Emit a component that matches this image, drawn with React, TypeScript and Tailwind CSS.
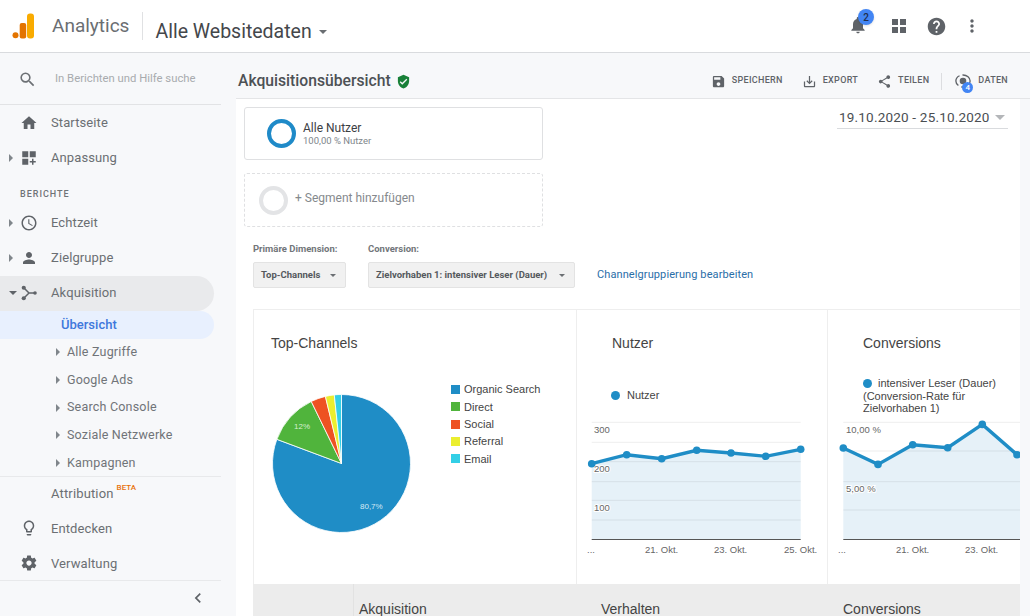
import React from "react";

const roboto = "[font-family:Roboto,'Noto_Sans',sans-serif]";

const P = {
  home: "M10 20v-6h4v6h5v-8h3L12 3 2 12h3v8z",
  search: "M15.5 14h-.79l-.28-.27A6.47 6.47 0 0 0 16 9.5 6.5 6.5 0 1 0 9.5 16c1.61 0 3.09-.59 4.23-1.57l.27.28v.79l5 4.99L20.49 19l-4.99-5zm-6 0C7.01 14 5 11.99 5 9.5S7.01 5 9.5 5 14 7.01 14 9.5 11.99 14 9.5 14z",
  clock: "M11.99 2C6.47 2 2 6.48 2 12s4.47 10 9.99 10C17.52 22 22 17.52 22 12S17.52 2 11.99 2zM12 20c-4.42 0-8-3.58-8-8s3.58-8 8-8 8 3.58 8 8-3.58 8-8 8zm.5-13H11v6l5.25 3.15.75-1.23-4.5-2.67z",
  person: "M12 12c2.21 0 4-1.79 4-4s-1.79-4-4-4-4 1.79-4 4 1.79 4 4 4zm0 2c-2.67 0-8 1.34-8 4v2h16v-2c0-2.66-5.33-4-8-4z",
  bulb: "M9 21c0 .55.45 1 1 1h4c.55 0 1-.45 1-1v-1H9v1zm3-19C8.14 2 5 5.14 5 9c0 2.38 1.19 4.47 3 5.74V17c0 .55.45 1 1 1h6c.55 0 1-.45 1-1v-2.26c1.81-1.27 3-3.36 3-5.74 0-3.86-3.14-7-7-7zm2.85 11.1l-.85.6V16h-4v-2.3l-.85-.6C7.8 12.16 7 10.63 7 9c0-2.76 2.24-5 5-5s5 2.24 5 5c0 1.63-.8 3.16-2.15 4.1z",
  gear: "M19.43 12.98c.04-.32.07-.64.07-.98s-.03-.66-.07-.98l2.11-1.65c.19-.15.24-.42.12-.64l-2-3.46c-.12-.22-.39-.3-.61-.22l-2.49 1c-.52-.4-1.08-.73-1.69-.98l-.38-2.65C14.46 2.18 14.25 2 14 2h-4c-.25 0-.46.18-.49.42l-.38 2.65c-.61.25-1.17.59-1.69.98l-2.49-1c-.23-.09-.49 0-.61.22l-2 3.46c-.13.22-.07.49.12.64l2.11 1.65c-.04.32-.07.65-.07.98s.03.66.07.98l-2.11 1.65c-.19.15-.24.42-.12.64l2 3.46c.12.22.39.3.61.22l2.49-1c.52.4 1.08.73 1.69.98l.38 2.65c.03.24.24.42.49.42h4c.25 0 .46-.18.49-.42l.38-2.65c.61-.25 1.17-.59 1.69-.98l2.49 1c.23.09.49 0 .61-.22l2-3.46c.12-.22.07-.49-.12-.64l-2.11-1.65zM12 15.5c-1.93 0-3.5-1.57-3.5-3.5s1.57-3.5 3.5-3.5 3.5 1.57 3.5 3.5-1.57 3.5-3.5 3.5z",
  save: "M17 3H5c-1.11 0-2 .9-2 2v14c0 1.1.89 2 2 2h14c1.1 0 2-.9 2-2V7l-4-4zm-5 16c-1.66 0-3-1.34-3-3s1.34-3 3-3 3 1.34 3 3-1.34 3-3 3zm3-10H5V5h10v4z",
  share: "M18 16.08c-.76 0-1.44.3-1.96.77L8.91 12.7c.05-.23.09-.46.09-.7s-.04-.47-.09-.7l7.05-4.11c.54.5 1.25.81 2.04.81 1.66 0 3-1.34 3-3s-1.34-3-3-3-3 1.34-3 3c0 .24.04.47.09.7L8.04 9.81C7.5 9.31 6.79 9 6 9c-1.66 0-3 1.34-3 3s1.34 3 3 3c.79 0 1.5-.31 2.04-.81l7.12 4.16c-.05.21-.08.43-.08.65 0 1.61 1.31 2.92 2.92 2.92 1.61 0 2.92-1.31 2.92-2.92s-1.31-2.92-2.92-2.92z",
  help: "M12 2C6.48 2 2 6.48 2 12s4.48 10 10 10 10-4.48 10-10S17.52 2 12 2zm1 17h-2v-2h2v2zm2.07-7.75l-.9.92C13.45 12.9 13 13.5 13 15h-2v-.5c0-1.1.45-2.1 1.17-2.83l1.24-1.26c.37-.36.59-.86.59-1.41 0-1.1-.9-2-2-2s-2 .9-2 2H8c0-2.21 1.79-4 4-4s4 1.79 4 4c0 .88-.36 1.68-.93 2.25z",
  bell: "M12 22c1.1 0 2-.9 2-2h-4c0 1.1.89 2 2 2zm6-6v-5c0-3.07-1.64-5.64-4.5-6.32V4c0-.83-.67-1.5-1.5-1.5s-1.5.67-1.5 1.5v.68C7.63 5.36 6 7.92 6 11v5l-2 2v1h16v-1l-2-2z",
  shield: "M12 1L3 5v6c0 5.55 3.84 10.74 9 12 5.16-1.26 9-6.45 9-12V5l-9-4zm-2 16l-4-4 1.41-1.41L10 14.17l6.59-6.59L18 9l-8 8z",
  dots: "M12 8c1.1 0 2-.9 2-2s-.9-2-2-2-2 .9-2 2 .9 2 2 2zm0 2c-1.1 0-2 .9-2 2s.9 2 2 2 2-.9 2-2-.9-2-2-2zm0 6c-1.1 0-2 .9-2 2s.9 2 2 2 2-.9 2-2-.9-2-2-2z",
  chevron: "M15.41 7.41L14 6l-6 6 6 6 1.41-1.41L10.83 12z",
  download: "M19 12v7H5v-7H3v7c0 1.1.9 2 2 2h14c1.1 0 2-.9 2-2v-7h-2zm-6 .67l2.59-2.58L17 11.5l-5 5-5-5 1.41-1.41L11 12.67V3h2z",
};

function Ico({ d, size = 18, color = "#5f6368" }: { d: string; size?: number; color?: string }) {
  return (
    <svg width={size} height={size} viewBox="0 0 24 24" fill={color} className="shrink-0">
      <path d={d} />
    </svg>
  );
}

function Dash() {
  return (
    <svg width="18" height="18" viewBox="0 0 24 24" fill="#5f6368" className="shrink-0">
      <rect x="3" y="3" width="8" height="8" />
      <rect x="13" y="3" width="8" height="8" />
      <rect x="3" y="13" width="8" height="8" />
      <path d="M16 13h2v3h3v2h-3v3h-2v-3h-3v-2h3z" />
    </svg>
  );
}

function Acq() {
  return (
    <svg width="18" height="18" viewBox="0 0 24 24" fill="none" className="shrink-0">
      <path d="M5 5l7 7h8M12 12l-7 7" stroke="#5f6368" strokeWidth="2" />
      <circle cx="5" cy="5" r="2.8" fill="#5f6368" />
      <circle cx="5" cy="19" r="2.8" fill="#5f6368" />
      <circle cx="20" cy="12" r="2.4" fill="#5f6368" />
    </svg>
  );
}

function Arrow({ open }: { open?: boolean }) {
  return open ? (
    <span className="w-0 h-0 border-x-[4px] border-x-transparent border-t-[4px] border-t-[#5f6368]" />
  ) : (
    <span className="w-0 h-0 border-y-[4px] border-y-transparent border-l-[4px] border-l-[#80868b]" />
  );
}

function NavItem({ label, arrow, open, icon, active }: { label: string; arrow?: boolean; open?: boolean; icon?: React.ReactNode; active?: boolean }) {
  return (
    <div className={`h-[35px] flex items-center shrink-0 ${active ? "w-[214px] bg-[#e9eaec] rounded-r-[18px]" : ""}`}>
      <span className="w-[20px] pl-[9px] flex items-center shrink-0">{arrow && <Arrow open={open} />}</span>
      <span className="w-[31px] flex items-center shrink-0">{icon}</span>
      <span className="text-[13px] text-[#6b6f73] tracking-[0.1px]">{label}</span>
    </div>
  );
}

function SubItem({ label }: { label: string }) {
  return (
    <div className="h-[27.7px] flex items-center shrink-0 pl-[56px]">
      <Arrow />
      <span className="ml-[7px] text-[12.5px] text-[#707478] tracking-[0.2px]">{label}</span>
    </div>
  );
}

function Sidebar() {
  return (
    <aside className="w-[236px] shrink-0 bg-[#f7f8fa] flex flex-col">
      <div className="w-[221px] h-[52px] shrink-0 border-b border-[#e2e3e5] flex items-center pl-[18px] pt-[2px]">
        <Ico d={P.search} size={19} color="#6c7074" />
        <span className="ml-[18px] text-[11.3px] text-[#a8abae]">In Berichten und Hilfe suche</span>
      </div>
      <NavItem label="Startseite" icon={<Ico d={P.home} />} />
      <NavItem label="Anpassung" arrow icon={<Dash />} />
      <div className="h-[30.5px] shrink-0 flex items-center pl-[20px] pt-[8px] text-[9px] font-medium tracking-[1px] text-[#6f7377]">BERICHTE</div>
      <NavItem label="Echtzeit" arrow icon={<Ico d={P.clock} />} />
      <NavItem label="Zielgruppe" arrow icon={<Ico d={P.person} />} />
      <NavItem label="Akquisition" arrow open active icon={<Acq />} />
      <div className="w-[214px] h-[28px] shrink-0 bg-[#e8f0fe] rounded-r-[14px] flex items-center pl-[61px] text-[13px] text-[#3f78dc] font-medium">Übersicht</div>
      <SubItem label="Alle Zugriffe" />
      <SubItem label="Google Ads" />
      <SubItem label="Search Console" />
      <SubItem label="Soziale Netzwerke" />
      <SubItem label="Kampagnen" />
      <div className="w-[221px] border-t border-[#e8e9eb] shrink-0 -mt-[1px]" />
      <div className="h-[34px] flex items-center shrink-0 pl-[51px]">
        <span className="text-[13px] text-[#6b6f73] tracking-[0.15px]">Attribution</span>
        <span className="ml-[3px] mb-[13px] text-[8px] leading-[9px] font-medium text-[#e8710a]">BETA</span>
      </div>
      <NavItem label="Entdecken" icon={<Ico d={P.bulb} />} />
      <NavItem label="Verwaltung" icon={<Ico d={P.gear} />} />
      <div className="w-[221px] h-[36px] shrink-0 border-t border-[#e8e9eb] flex items-center justify-end pr-[13px] mt-[-1px]">
        <Ico d={P.chevron} size={20} />
      </div>
    </aside>
  );
}

function Header() {
  return (
    <header className="h-[53px] shrink-0 bg-white border-b border-[#d9dbde] flex items-center relative">
      <svg width="24" height="26" viewBox="0 0 24 26" className="ml-[12px] shrink-0">
        <rect x="15" y="0.5" width="7" height="25" rx="3" fill="#f9ab00" />
        <rect x="7.7" y="10" width="6.5" height="15.5" rx="2" fill="#e37400" />
        <circle cx="3.5" cy="22.3" r="3" fill="#e37400" />
      </svg>
      <span className="ml-[16px] text-[19px] text-[#6a6e72]">Analytics</span>
      <span className="ml-[13px] h-[28px] w-px bg-[#e0e1e3]" />
      <span className="ml-[12px] mt-[12px] text-[19.5px] text-[#44474b]">Alle Websitedaten</span>
      <span className="ml-[7px] mt-[12px] w-0 h-0 border-x-[4px] border-x-transparent border-t-[4px] border-t-[#6a6e72]" />
      <div className="ml-auto mr-[48px] flex items-center">
        <div className="relative flex -mt-[2px]">
          <Ico d={P.bell} size={20} />
          <span className="absolute -top-[6px] left-[10px] w-[16px] h-[16px] rounded-full bg-[#4285f4] text-[#1f2d4d] text-[10px] font-medium flex items-center justify-center shadow-sm">2</span>
        </div>
        <svg width="14" height="14" viewBox="0 0 14 14" fill="#5f6368" className="ml-[24px]">
          <rect x="0" y="0" width="6" height="6" />
          <rect x="8" y="0" width="6" height="6" />
          <rect x="0" y="8" width="6" height="6" />
          <rect x="8" y="8" width="6" height="6" />
        </svg>
        <span className="ml-[20px] flex"><Ico d={P.help} size={21} /></span>
        <span className="ml-[15px] flex"><Ico d={P.dots} size={20} /></span>
      </div>
    </header>
  );
}

function Action({ icon, label }: { icon: React.ReactNode; label: string }) {
  return (
    <div className="flex items-center gap-[6px]">
      {icon}
      <span className="text-[9px] font-medium text-[#5f6368] tracking-[0.3px]">{label}</span>
    </div>
  );
}

function DataIcon() {
  return (
    <span className="relative flex">
      <svg width="18" height="18" viewBox="0 0 24 24" fill="none" stroke="#5f6368" strokeWidth="1.8" className="shrink-0">
        <ellipse cx="12" cy="12" rx="9.5" ry="8" strokeDasharray="16 4" />
        <circle cx="12" cy="12" r="3.5" fill="#5f6368" />
      </svg>
      <span className="absolute -bottom-[3px] left-[8px] w-[11px] h-[11px] rounded-full bg-[#4285f4] text-white text-[8px] font-medium flex items-center justify-center">4</span>
    </span>
  );
}

function TitleBar() {
  return (
    <div className="h-[46px] shrink-0 border-b border-[#e4e5e7] flex items-center pl-[2px] pr-[22px] pt-[11px] w-full">
      <h1 className="text-[15.7px] font-medium text-[#4d5155] whitespace-nowrap">Akquisitionsübersicht</h1>
      <span className="ml-[5px] flex"><Ico d={P.shield} size={15} color="#188038" /></span>
      <div className="ml-auto flex items-center">
        <Action icon={<Ico d={P.save} size={15} />} label="SPEICHERN" />
        <span className="ml-[19px]"><Action icon={<Ico d={P.download} size={15} />} label="EXPORT" /></span>
        <span className="ml-[19px]"><Action icon={<Ico d={P.share} size={15} />} label="TEILEN" /></span>
        <span className="ml-[12px] mr-[12px] h-[17px] w-px bg-[#dcdde0]" />
        <Action icon={<DataIcon />} label="DATEN" />
      </div>
    </div>
  );
}

function Segments() {
  return (
    <div className="flex items-start">
      <div className="flex flex-col gap-[13px] pl-[8px] pt-[8px]">
        <div className="w-[299px] h-[53px] border border-[#dfe0e2] rounded-[3px] flex items-center pl-[22px]">
          <span className="w-[29px] h-[29px] rounded-full border-[4px] border-[#1f8ac8]" />
          <div className="ml-[7px] flex flex-col">
            <span className="text-[12px] leading-[14px] text-[#3c4043]">Alle Nutzer</span>
            <span className="text-[9.5px] leading-[12px] text-[#80868b]">100,00 % Nutzer</span>
          </div>
        </div>
        <div className="w-[299px] h-[54px] border border-dashed border-[#dfe0e2] rounded-[3px] flex items-center pl-[14px]">
          <span className="w-[29px] h-[29px] rounded-full border-[4px] border-[#e3e4e6]" />
          <span className="ml-[7px] mb-[4px] text-[12px] text-[#85898d]">+ Segment hinzufügen</span>
        </div>
      </div>
      <div className="ml-auto mt-[7px] mr-[12px] w-[171px] h-[23px] border-b border-[#d9dbde] flex items-center pl-[2px]">
        <span className="text-[13.5px] text-[#4a4e52] tracking-[0.2px] whitespace-nowrap">19.10.2020 - 25.10.2020</span>
        <span className="ml-[5px] w-0 h-0 border-x-[5px] border-x-transparent border-t-[5px] border-t-[#b4b6b9]" />
      </div>
    </div>
  );
}

function Select({ label, value, w, gap }: { label: string; value: string; w: string; gap?: string }) {
  return (
    <div className={`flex flex-col ${gap ?? ""}`}>
      <span className="text-[9.5px] leading-[12px] font-bold text-[#72767a] whitespace-nowrap">{label}</span>
      <div className={`mt-[7px] ${w} h-[26px] bg-[#f1f1f1] border border-[#e3e3e3] rounded-[2px] flex items-center pl-[7px] pr-[9px]`}>
        <span className="text-[9.5px] font-bold text-[#55595d] whitespace-nowrap">{value}</span>
        <span className="ml-auto w-0 h-0 border-x-[3.5px] border-x-transparent border-t-[3.5px] border-t-[#6b6f73]" />
      </div>
    </div>
  );
}

function Dimensions() {
  return (
    <div className="flex items-end pl-[17px] mt-[16px]">
      <Select label="Primäre Dimension:" value="Top-Channels" w="w-[93px]" />
      <Select label="Conversion:" value="Zielvorhaben 1: intensiver Leser (Dauer)" w="w-[207px]" gap="ml-[22px]" />
      <span className="ml-[22px] mb-[5px] text-[11px] tracking-[0.1px] text-[#2a6ea8] whitespace-nowrap">Channelgruppierung bearbeiten</span>
    </div>
  );
}

function Legend({ color, label }: { color: string; label: string }) {
  return (
    <div className="flex items-center h-[17.3px]">
      <span className="w-[9px] h-[9px] shrink-0" style={{ backgroundColor: color }} />
      <span className="ml-[4px] text-[11px] text-[#444]">{label}</span>
    </div>
  );
}

function polar(a: number, r = 69): [number, number] {
  const t = (a * Math.PI) / 180;
  return [69.5 + r * Math.sin(t), 69.5 - r * Math.cos(t)];
}

function Slice({ from, to, color }: { from: number; to: number; color: string }) {
  const [x1, y1] = polar(from);
  const [x2, y2] = polar(to);
  const large = to - from > 180 ? 1 : 0;
  return <path d={`M69.5 69.5L${x1} ${y1}A69 69 0 ${large} 1 ${x2} ${y2}Z`} fill={color} stroke="#fff" strokeWidth="0.8" />;
}

function PieCard() {
  return (
    <div className="w-[324px] shrink-0 border-l border-r border-[#eeeeee] flex flex-col">
      <h2 className="ml-[17px] mt-[24px] text-[14px] leading-[18px] text-[#444] font-['Liberation_Sans',sans-serif]">Top-Channels</h2>
      <div className="flex items-start mt-[27px]">
        <svg width="139" height="139" viewBox="0 0 139 139" className="ml-[18px] mt-[15px] shrink-0">
          <Slice from={0} to={290.5} color="#1f8dc6" />
          <Slice from={290.5} to={334} color="#50b43c" />
          <Slice from={334} to={346.5} color="#ee5222" />
          <Slice from={346.5} to={354} color="#ebee2f" />
          <Slice from={354} to={360} color="#33cfe6" />
          <text x="88" y="115" fontSize="8" fill="#d5e9f4" fontFamily="Liberation Sans">80,7%</text>
          <text x="22" y="35" fontSize="8" fill="#d6efd0" fontFamily="Liberation Sans">12%</text>
        </svg>
        <div className="ml-[40px] mt-[2px] flex flex-col font-['Liberation_Sans',sans-serif]">
          <Legend color="#1f8dc6" label="Organic Search" />
          <Legend color="#50b43c" label="Direct" />
          <Legend color="#ee5222" label="Social" />
          <Legend color="#ebee2f" label="Referral" />
          <Legend color="#33cfe6" label="Email" />
        </div>
      </div>
    </div>
  );
}

function LineChart({ w, pts, endX, yLabels, xLabels, grid }: { w: number; pts: [number, number][]; endX: number; yLabels: [string, number, number][]; xLabels: [string, number][]; grid: number[] }) {
  const line = pts.map((p) => p.join(",")).join(" ");
  const area = `${pts.map((p) => p.join(",")).join(" ")} ${endX},${pts[pts.length - 1][1]} ${endX},117 ${pts[0][0]},117`;
  return (
    <svg width={w} height="140" viewBox={`0 0 ${w} 140`} className="block overflow-visible" style={{ fontFamily: "Liberation Sans" }}>
      <polygon points={area} fill="#e6f1f8" />
      {grid.map((y) => (
        <line key={y} x1={pts[0][0]} x2={endX} y1={y} y2={y} stroke="#000" strokeOpacity="0.07" />
      ))}
      <line x1={pts[0][0]} x2={endX} y1="117.5" y2="117.5" stroke="#555" strokeWidth="1" />
      {yLabels.map(([t, x, y]) => (
        <text key={t} x={x} y={y} fontSize="9.5" fill="#666" stroke="#fff" strokeWidth="2" paintOrder="stroke">{t}</text>
      ))}
      <polyline points={line} fill="none" stroke="#1f8dc6" strokeWidth="3.4" />
      {pts.map(([x, y]) => (
        <circle key={x} cx={x} cy={y} r="3.8" fill="#1f8dc6" />
      ))}
      {xLabels.map(([t, x]) => (
        <text key={t + x} x={x} y="131" fontSize="9.5" fill="#666">{t}</text>
      ))}
    </svg>
  );
}

function NutzerCard() {
  return (
    <div className="w-[251px] shrink-0 border-r border-[#eeeeee] flex flex-col font-['Liberation_Sans',sans-serif]">
      <h2 className="ml-[35px] mt-[24px] text-[14px] leading-[18px] text-[#444]">Nutzer</h2>
      <div className="ml-[34px] mt-[35px] h-[16px] flex items-center">
        <span className="w-[9px] h-[9px] rounded-full bg-[#1f8dc6]" />
        <span className="ml-[7px] text-[11px] text-[#444]">Nutzer</span>
      </div>
      <div className="mt-[19px]">
        <LineChart
          w={250}
          pts={[[14.7, 41.7], [49.7, 32.7], [84.7, 36.7], [119.7, 28.3], [154, 31], [188.7, 34.3], [223.7, 27.3]]}
          endX={223.7}
          grid={[0.3, 20.3, 39.7, 59.7, 78.3, 98]}
          yLabels={[["300", 17, 11], ["200", 17, 50], ["100", 17, 89]]}
          xLabels={[["...", 10], ["21. Okt.", 68], ["23. Okt.", 137], ["25. Okt.", 207]]}
        />
      </div>
    </div>
  );
}

function ConversionCard() {
  return (
    <div className="flex-1 min-w-0 overflow-hidden flex flex-col font-['Liberation_Sans',sans-serif]">
      <h2 className="ml-[35px] mt-[24px] text-[14px] leading-[18px] text-[#444] whitespace-nowrap">Conversions</h2>
      <div className="ml-[35px] mt-[25px] text-[11px] leading-[12.5px] text-[#444] whitespace-nowrap">
        <div className="flex items-center">
          <span className="w-[9px] h-[9px] rounded-full bg-[#1f8dc6]" />
          <span className="ml-[6px]">intensiver Leser (Dauer)</span>
        </div>
        <div>(Conversion-Rate für</div>
        <div>Zielvorhaben 1)</div>
      </div>
      <div className="mt-[7.5px]">
        <LineChart
          w={192}
          pts={[[15.3, 26], [50, 42.4], [84.7, 22.7], [119.7, 25.7], [154.3, 2.4], [189, 32.7]]}
          endX={192}
          grid={[0.3, 29, 59.7, 88]}
          yLabels={[["10,00 %", 18, 11], ["5,00 %", 18, 70]]}
          xLabels={[["...", 10], ["21. Okt.", 68], ["23. Okt.", 137]]}
        />
      </div>
    </div>
  );
}

function TableHead() {
  return (
    <div className="flex-1 min-h-0 bg-[#ececec] flex items-end font-['Liberation_Sans',sans-serif] text-[14px] leading-[14px] text-[#444]">
      <div className="w-[101px] h-full border-r border-[#e2e2e2] shrink-0" />
      <div className="w-[247px] shrink-0 pl-[5px]">Akquisition</div>
      <div className="w-[242px] shrink-0">Verhalten</div>
      <div>Conversions</div>
    </div>
  );
}

export default function App() {
  return (
    <div className={`w-[1030px] h-[616px] overflow-hidden flex flex-col bg-[#f7f8fa] ${roboto}`}>
      <Header />
      <div className="flex flex-1 min-h-0">
        <Sidebar />
        <main className="flex-1 min-w-0 flex flex-col">
          <TitleBar />
          <div className="w-[784px] flex-1 min-h-0 bg-white flex flex-col overflow-hidden">
            <Segments />
            <Dimensions />
            <div className="ml-[17px] mt-[21px] flex-1 min-h-0 flex flex-col border-t border-[#eeeeee]">
              <div className="flex h-[274px] shrink-0">
                <PieCard />
                <NutzerCard />
                <ConversionCard />
              </div>
              <TableHead />
            </div>
          </div>
        </main>
      </div>
    </div>
  );
}
